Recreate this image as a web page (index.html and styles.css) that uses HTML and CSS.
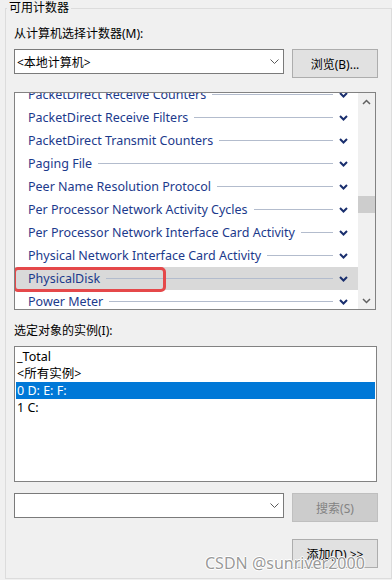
FILE: index.html
```html
<!DOCTYPE html>
<html lang="zh-CN">
<head>
<meta charset="utf-8">
<title>添加计数器</title>
<link rel="stylesheet" href="styles.css">
</head>
<body>
<fieldset class="group">
  <legend class="legend">可用计数器</legend>
  <div class="lbl lbl-top">从计算机选择计数器(M):</div>
  <div class="ctl-row">
    <div class="combo">
      <span class="combo-text">&lt;本地计算机&gt;</span>
      <svg class="combo-arrow" width="9" height="5" viewBox="0 0 9 5"><path d="M0.5 0.5 L4.5 4.5 L8.5 0.5" fill="none" stroke="#5a5a5a" stroke-width="1"/></svg>
    </div>
    <div class="btn">浏览(B)...</div>
  </div>

  <div class="counter-list">
    <div class="items">
      <div class="item first"><span class="name">PacketDirect Receive Counters</span><span class="rule"></span><svg class="chev" width="9" height="6" viewBox="0 0 9 6"><path d="M1 1 L4.5 4.5 L8 1" fill="none" stroke="#1a2f6e" stroke-width="2"/></svg></div>
      <div class="item"><span class="name">PacketDirect Receive Filters</span><span class="rule"></span><svg class="chev" width="9" height="6" viewBox="0 0 9 6"><path d="M1 1 L4.5 4.5 L8 1" fill="none" stroke="#1a2f6e" stroke-width="2"/></svg></div>
      <div class="item"><span class="name">PacketDirect Transmit Counters</span><span class="rule"></span><svg class="chev" width="9" height="6" viewBox="0 0 9 6"><path d="M1 1 L4.5 4.5 L8 1" fill="none" stroke="#1a2f6e" stroke-width="2"/></svg></div>
      <div class="item"><span class="name">Paging File</span><span class="rule"></span><svg class="chev" width="9" height="6" viewBox="0 0 9 6"><path d="M1 1 L4.5 4.5 L8 1" fill="none" stroke="#1a2f6e" stroke-width="2"/></svg></div>
      <div class="item"><span class="name">Peer Name Resolution Protocol</span><span class="rule"></span><svg class="chev" width="9" height="6" viewBox="0 0 9 6"><path d="M1 1 L4.5 4.5 L8 1" fill="none" stroke="#1a2f6e" stroke-width="2"/></svg></div>
      <div class="item"><span class="name">Per Processor Network Activity Cycles</span><span class="rule"></span><svg class="chev" width="9" height="6" viewBox="0 0 9 6"><path d="M1 1 L4.5 4.5 L8 1" fill="none" stroke="#1a2f6e" stroke-width="2"/></svg></div>
      <div class="item"><span class="name">Per Processor Network Interface Card Activity</span><span class="rule"></span><svg class="chev" width="9" height="6" viewBox="0 0 9 6"><path d="M1 1 L4.5 4.5 L8 1" fill="none" stroke="#1a2f6e" stroke-width="2"/></svg></div>
      <div class="item"><span class="name">Physical Network Interface Card Activity</span><span class="rule"></span><svg class="chev" width="9" height="6" viewBox="0 0 9 6"><path d="M1 1 L4.5 4.5 L8 1" fill="none" stroke="#1a2f6e" stroke-width="2"/></svg></div>
      <div class="item selected"><span class="name">PhysicalDisk</span><span class="rule"></span><svg class="chev" width="9" height="6" viewBox="0 0 9 6"><path d="M1 1 L4.5 4.5 L8 1" fill="none" stroke="#1a2f6e" stroke-width="2"/></svg><span class="mark"></span></div>
      <div class="item"><span class="name">Power Meter</span><span class="rule"></span><svg class="chev" width="9" height="6" viewBox="0 0 9 6"><path d="M1 1 L4.5 4.5 L8 1" fill="none" stroke="#1a2f6e" stroke-width="2"/></svg></div>
    </div>
    <div class="scroll">
      <div class="sbtn"><svg width="9" height="6" viewBox="0 0 9 6"><path d="M1 5 L4.5 1.5 L8 5" fill="none" stroke="#606060" stroke-width="1.5"/></svg></div>
      <div class="track"><div class="thumb"></div></div>
      <div class="sbtn"><svg width="9" height="6" viewBox="0 0 9 6"><path d="M1 1 L4.5 4.5 L8 1" fill="none" stroke="#606060" stroke-width="1.5"/></svg></div>
    </div>
  </div>

  <div class="lbl lbl-inst">选定对象的实例(I):</div>
  <div class="inst-list">
    <div class="inst">_Total</div>
    <div class="inst">&lt;所有实例&gt;</div>
    <div class="inst sel">0 D: E: F:</div>
    <div class="inst">1 C:</div>
  </div>

  <div class="ctl-row ctl-row2">
    <div class="combo">
      <span class="combo-text"></span>
      <svg class="combo-arrow" width="9" height="5" viewBox="0 0 9 5"><path d="M0.5 0.5 L4.5 4.5 L8.5 0.5" fill="none" stroke="#5a5a5a" stroke-width="1"/></svg>
    </div>
    <div class="btn disabled">搜索(S)</div>
  </div>

  <div class="add-row">
    <div class="btn">添加(D) &gt;&gt;</div>
  </div>
</fieldset>
<div class="watermark">CSDN @sunriver2000</div>
</body>
</html>
```

FILE: styles.css
```css
html, body {
  margin: 0;
  padding: 0;
}
body {
  width: 392px;
  height: 580px;
  overflow: hidden;
  position: relative;
  background: #f0f0f0;
  font-family: "Noto Sans", "Noto Sans CJK SC", sans-serif;
  font-size: 12px;
  color: #000;
}
.group {
  box-sizing: border-box;
  width: 387px;
  height: 579px;
  margin: 0 0 0 5px;
  padding: 0 8px;
  border: 1px solid #dcdcdc;
  min-inline-size: 0;
}
.legend {
  padding: 0 2px;
  margin-left: -7px;
  font-size: 12px;
  line-height: 16px;
  height: 16px;
}
.lbl {
  font-size: 12px;
  line-height: 16px;
  height: 16px;
  white-space: nowrap;
}
.lbl-top {
  margin-top: 10px;
}
.ctl-row {
  display: flex;
  align-items: flex-start;
  gap: 8px;
  width: 364px;
  margin-top: 7px;
}
.combo {
  box-sizing: border-box;
  width: 270px;
  height: 25px;
  background: #fff;
  border: 1px solid #7a7a7a;
  display: flex;
  align-items: center;
  padding: 0 3px 0 2px;
}
.combo-text {
  flex: 1;
  font-size: 12px;
  white-space: nowrap;
}
.combo-arrow {
  display: block;
  margin-right: 1px;
}
.btn {
  box-sizing: border-box;
  width: 86px;
  height: 29px;
  background: #e1e1e1;
  border: 1px solid #adadad;
  display: flex;
  align-items: center;
  justify-content: center;
  font-size: 12px;
  white-space: nowrap;
}
.btn.disabled {
  background: #cccccc;
  border-color: #bfbfbf;
  color: #838383;
}
.counter-list {
  box-sizing: border-box;
  width: 362px;
  height: 218px;
  margin-top: 14px;
  border: 1px solid #828282;
  display: flex;
  background: #fff;
}
.items {
  flex: 1;
  overflow: hidden;
  background: #fff;
}
.item {
  position: relative;
  height: 23px;
  display: flex;
  align-items: center;
  padding: 0 10px 0 13px;
  color: #1c3a8c;
  font-size: 12.5px;
  white-space: nowrap;
}
.item.first {
  margin-top: -10px;
}
.item.selected {
  background: #d9d9d9;
}
.rule {
  flex: 1;
  height: 1px;
  background: #b3bccd;
  margin: 0 6px 0 6px;
}
.chev {
  display: block;
}
.mark {
  position: absolute;
  left: -2px;
  top: 0;
  width: 153px;
  height: 25px;
  box-sizing: border-box;
  border: 3px solid #e5484a;
  border-radius: 5px;
}
.scroll {
  width: 17px;
  background: #f0f0f0;
  display: flex;
  flex-direction: column;
}
.sbtn {
  height: 17px;
  display: flex;
  align-items: center;
  justify-content: center;
}
.sbtn svg {
  display: block;
}
.track {
  flex: 1;
}
.thumb {
  margin-top: 86px;
  height: 17px;
  background: #cdcdcd;
}
.lbl-inst {
  margin-top: 13px;
}
.inst-list {
  box-sizing: border-box;
  width: 363px;
  height: 136px;
  margin-top: 7px;
  border: 1px solid #828282;
  background: #fff;
  padding: 1px 1px 0 1px;
}
.inst {
  height: 17px;
  line-height: 17px;
  padding-left: 1px;
  font-size: 12.5px;
  white-space: nowrap;
}
.inst.sel {
  background: #0078d7;
  color: #fff;
}
.ctl-row2 {
  margin-top: 11px;
}
.add-row {
  display: flex;
  justify-content: flex-end;
  width: 364px;
  margin-top: 17px;
}
.watermark {
  position: absolute;
  left: 205px;
  top: 551px;
  font-family: "Noto Sans", "DejaVu Sans", sans-serif;
  font-size: 16px;
  line-height: 24px;
  color: rgba(135, 135, 135, 0.85);
  text-shadow: 1px 0 0 #fff, -1px 0 0 #fff, 0 1px 0 #fff, 0 -1px 0 #fff;
  white-space: nowrap;
}
```
